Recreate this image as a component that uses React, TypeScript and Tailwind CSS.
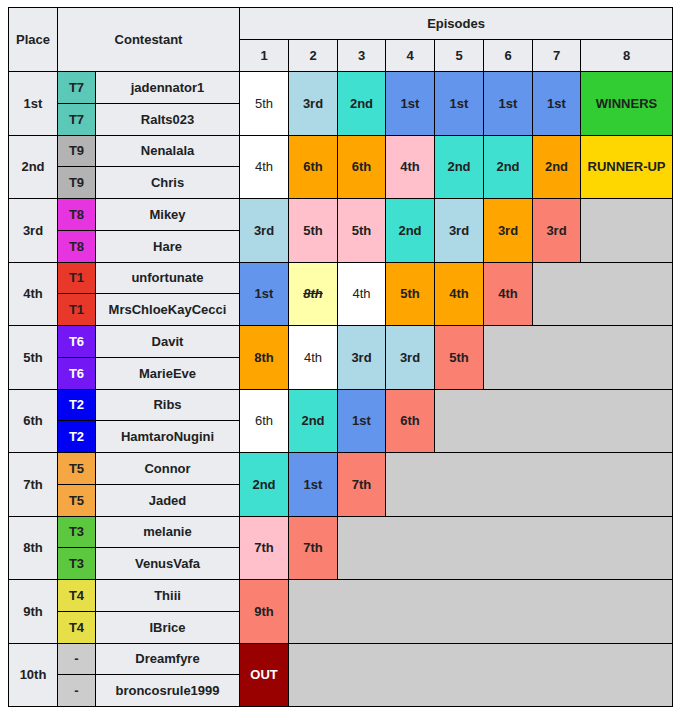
const CELL: Record<string, string> = {
  w: "bg-white font-normal",
  lb: "bg-[#add8e6] font-bold",
  tq: "bg-[#40e0d0] font-bold",
  cb: "bg-[#6495ed] font-bold",
  or: "bg-[#ffa500] font-bold",
  pk: "bg-[#ffc0cb] font-bold",
  sa: "bg-[#fa8072] font-bold",
  yl: "bg-[#ffffaa] font-bold italic line-through",
  win: "bg-[#32cd32] font-bold",
  run: "bg-[#ffd700] font-bold",
  out: "bg-[#990000] font-bold text-white",
};

type Row = {
  place: string;
  team: string;
  teamCls: string;
  names: [string, string];
  eps: [string, string][];
  blank: number;
};

const rows: Row[] = [
  {
    place: "1st",
    team: "T7",
    teamCls: "bg-[#5cc8b8]",
    names: ["jadennator1", "Ralts023"],
    eps: [["5th", "w"], ["3rd", "lb"], ["2nd", "tq"], ["1st", "cb"], ["1st", "cb"], ["1st", "cb"], ["1st", "cb"], ["WINNERS", "win"]],
    blank: 0,
  },
  {
    place: "2nd",
    team: "T9",
    teamCls: "bg-[#b3b3b3]",
    names: ["Nenalala", "Chris"],
    eps: [["4th", "w"], ["6th", "or"], ["6th", "or"], ["4th", "pk"], ["2nd", "tq"], ["2nd", "tq"], ["2nd", "or"], ["RUNNER-UP", "run"]],
    blank: 0,
  },
  {
    place: "3rd",
    team: "T8",
    teamCls: "bg-[#e634e0]",
    names: ["Mikey", "Hare"],
    eps: [["3rd", "lb"], ["5th", "pk"], ["5th", "pk"], ["2nd", "tq"], ["3rd", "lb"], ["3rd", "or"], ["3rd", "sa"]],
    blank: 1,
  },
  {
    place: "4th",
    team: "T1",
    teamCls: "bg-[#e8382a]",
    names: ["unfortunate", "MrsChloeKayCecci"],
    eps: [["1st", "cb"], ["8th", "yl"], ["4th", "w"], ["5th", "or"], ["4th", "or"], ["4th", "sa"]],
    blank: 2,
  },
  {
    place: "5th",
    team: "T6",
    teamCls: "bg-[#7317f5] text-white",
    names: ["Davit", "MarieEve"],
    eps: [["8th", "or"], ["4th", "w"], ["3rd", "lb"], ["3rd", "lb"], ["5th", "sa"]],
    blank: 3,
  },
  {
    place: "6th",
    team: "T2",
    teamCls: "bg-[#0000f5] text-white",
    names: ["Ribs", "HamtaroNugini"],
    eps: [["6th", "w"], ["2nd", "tq"], ["1st", "cb"], ["6th", "sa"]],
    blank: 4,
  },
  {
    place: "7th",
    team: "T5",
    teamCls: "bg-[#f4a742]",
    names: ["Connor", "Jaded"],
    eps: [["2nd", "tq"], ["1st", "cb"], ["7th", "sa"]],
    blank: 5,
  },
  {
    place: "8th",
    team: "T3",
    teamCls: "bg-[#5bc840]",
    names: ["melanie", "VenusVafa"],
    eps: [["7th", "pk"], ["7th", "sa"]],
    blank: 6,
  },
  {
    place: "9th",
    team: "T4",
    teamCls: "bg-[#e6df48]",
    names: ["Thiii", "IBrice"],
    eps: [["9th", "sa"]],
    blank: 7,
  },
  {
    place: "10th",
    team: "-",
    teamCls: "bg-[#cccccc]",
    names: ["Dreamfyre", "broncosrule1999"],
    eps: [["OUT", "out"]],
    blank: 7,
  },
];

const td = "border border-black text-center align-middle p-0";

export default function App() {
  return (
    <div className="pt-[7px] pl-[8px] bg-white min-h-screen">
      <table
        className="w-[664px] table-fixed border-collapse text-[13px] leading-none text-[#202122]"
        style={{ fontFamily: '"Liberation Sans", Arial, sans-serif' }}
      >
        <colgroup>
          <col className="w-[49px]" />
          <col className="w-[38px]" />
          <col className="w-[144px]" />
          <col className="w-[49px]" />
          <col className="w-[49px]" />
          <col className="w-[48px]" />
          <col className="w-[49px]" />
          <col className="w-[49px]" />
          <col className="w-[49px]" />
          <col className="w-[48px]" />
          <col className="w-[92px]" />
        </colgroup>
        <thead>
          <tr className="h-[32px] bg-[#eaecf0] font-bold">
            <th rowSpan={2} className={td}>
              Place
            </th>
            <th rowSpan={2} colSpan={2} className={td}>
              Contestant
            </th>
            <th colSpan={8} className={td}>
              Episodes
            </th>
          </tr>
          <tr className="h-[32px] bg-[#eaecf0] font-bold">
            {[1, 2, 3, 4, 5, 6, 7, 8].map((n) => (
              <th key={n} className={td}>
                {n}
              </th>
            ))}
          </tr>
        </thead>
        <tbody>
          {rows.map((r) => (
            <>
              <tr key={r.place + "a"} className="h-[31.75px]">
                <td rowSpan={2} className={`${td} bg-[#eaecf0] font-bold`}>
                  {r.place}
                </td>
                <td className={`${td} font-bold ${r.teamCls}`}>{r.team}</td>
                <td className={`${td} bg-[#eaecf0] font-bold`}>{r.names[0]}</td>
                {r.eps.map(([label, k], i) => (
                  <td key={i} rowSpan={2} className={`${td} ${CELL[k]}`}>
                    {label}
                  </td>
                ))}
                {r.blank > 0 && (
                  <td rowSpan={2} colSpan={r.blank} className={`${td} bg-[#cccccc]`} />
                )}
              </tr>
              <tr key={r.place + "b"} className="h-[31.75px]">
                <td className={`${td} font-bold ${r.teamCls}`}>{r.team}</td>
                <td className={`${td} bg-[#eaecf0] font-bold`}>{r.names[1]}</td>
              </tr>
            </>
          ))}
        </tbody>
      </table>
    </div>
  );
}
